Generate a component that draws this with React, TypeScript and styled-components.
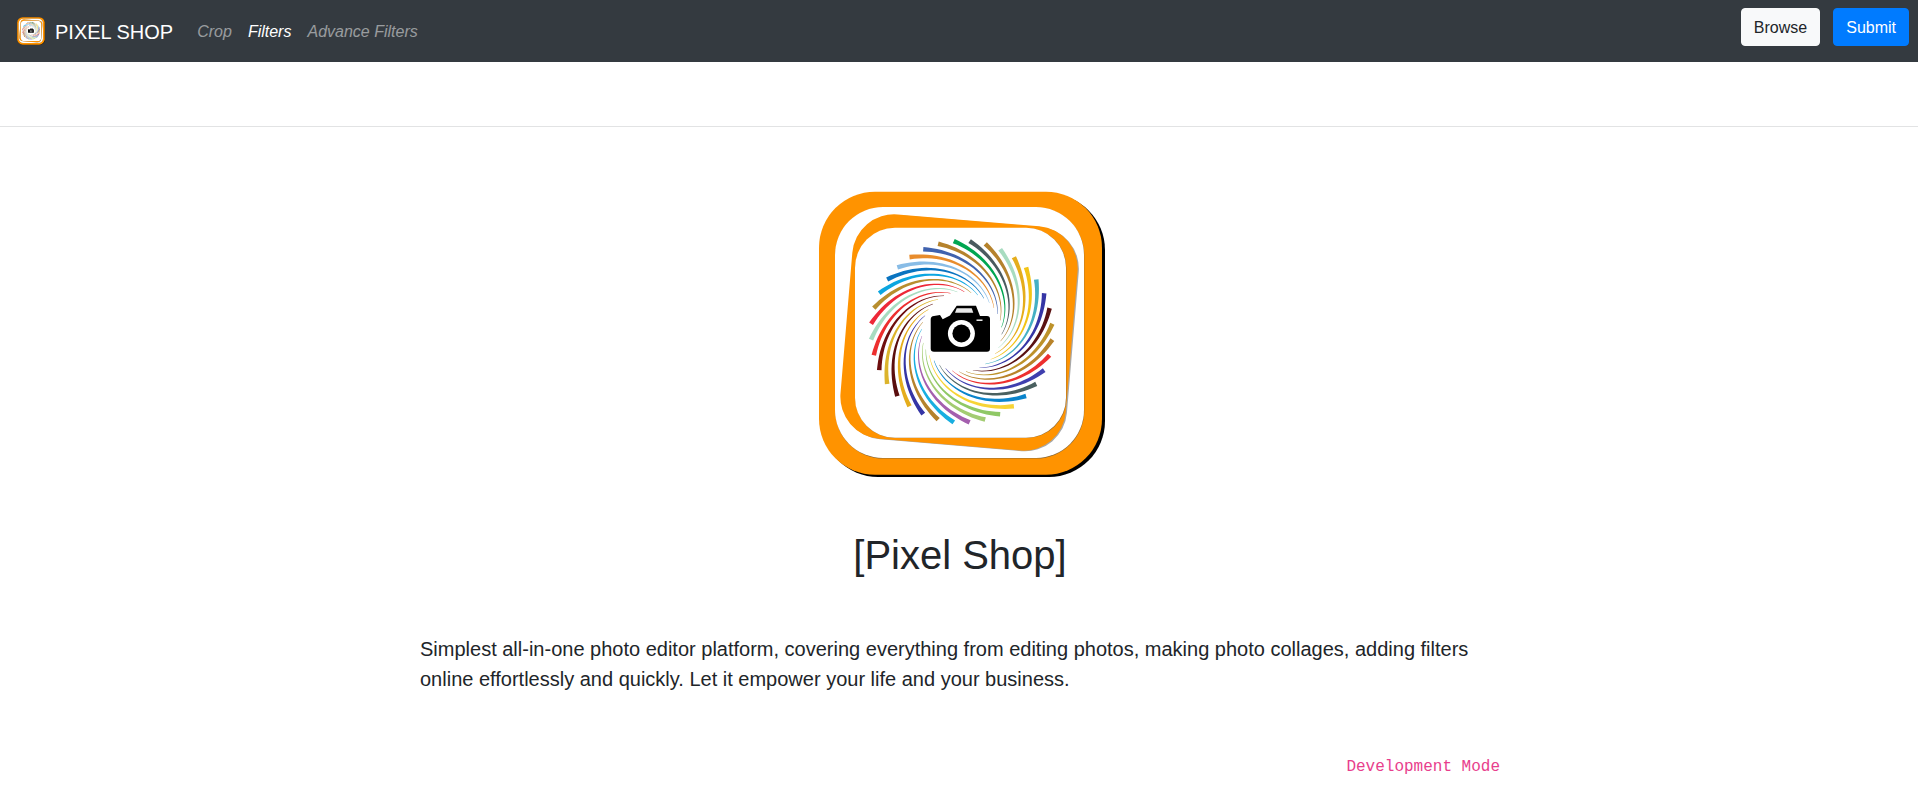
import styled, { createGlobalStyle } from 'styled-components';

const GlobalStyle = createGlobalStyle`
  * {
    box-sizing: border-box;
  }

  body {
    margin: 0;
    background: #fff;
    color: #212529;
    font-family: 'Liberation Sans', Arial, sans-serif;
    font-size: 16px;
    line-height: 1.5;
  }
`;

const Navbar = styled.nav`
  height: 62px;
  background: #343a40;
  display: flex;
  justify-content: space-between;
  align-items: flex-start;
  padding: 8px 9px 0 17px;
`;

const NavLeft = styled.div`
  display: flex;
  align-items: center;
  height: 46px;
`;

const Brand = styled.a`
  display: flex;
  align-items: center;
  gap: 10px;
  color: #fff;
  font-size: 20px;
  margin-right: 24px;
`;

const BrandName = styled.span`
  padding-top: 2px;
`;

const NavLinks = styled.div`
  display: flex;
  gap: 16px;
  padding-top: 2px;
`;

const NavLink = styled.a<{ $active?: boolean }>`
  font-style: italic;
  color: ${(p) => (p.$active ? '#fff' : 'rgba(255, 255, 255, 0.5)')};
`;

const NavButtons = styled.div`
  display: flex;
  gap: 13px;
`;

const Button = styled.button<{ $primary?: boolean }>`
  height: 38px;
  padding: 2px 12px 0;
  border: 1px solid ${(p) => (p.$primary ? '#007bff' : '#f8f9fa')};
  border-radius: 4px;
  background: ${(p) => (p.$primary ? '#007bff' : '#f8f9fa')};
  color: ${(p) => (p.$primary ? '#fff' : '#212529')};
  font: inherit;
`;

const SubBar = styled.div`
  height: 65px;
  border-bottom: 1px solid #e2e3e4;
`;

const Main = styled.main`
  display: flex;
  flex-direction: column;
  align-items: center;
  padding-top: 53px;
`;

const LogoSvg = styled.svg`
  display: block;
  flex: none;
  filter: blur(0.35px);
`;

const Title = styled.h1`
  margin: 41px 0 0 2px;
  font-size: 40px;
  font-weight: 400;
  line-height: 48px;
`;

const Content = styled.div`
  width: 1082px;
  margin-top: 55px;
  padding-left: 2px;
`;

const Lead = styled.p`
  margin: 0;
  font-size: 20px;
  line-height: 30px;
`;

const ModeRow = styled.div`
  display: flex;
  justify-content: flex-end;
  margin-top: 61px;
`;

const ModeCode = styled.code`
  color: #e83e8c;
  font-family: 'Liberation Mono', 'Courier New', monospace;
  font-size: 16px;
`;

const STRAND_COLORS = [
  '#00a651', '#4a5a5f', '#b5822c', '#a8dcc0', '#e5ad1c', '#f2c416',
  '#45b0c4', '#3535a5', '#5a1212', '#bd922a', '#b8832a', '#ed2f2f',
  '#3f3fae', '#4a6060', '#0a84cc', '#f7d436', '#8fc865', '#a3cc72',
  '#a45fae', '#18aee0', '#b5822c', '#3535a5', '#e5ad1c', '#5a0e0e',
  '#dcb42c', '#6e0f0f', '#ed2f2f', '#a8dcc0', '#ed2838', '#b88e2e',
  '#0ca6e0', '#0a74c0', '#88bce6', '#e88c2c', '#4062ae', '#b5822c',
];

const CX = 161.7;
const CY = 151.7;
const R_OUTER = 91;
const R_INNER = 40;
const SPIRAL_K = 108;

// one tapered arm of the iris: a log spiral, thick at the outer tip
function strandPath(tipDeg: number): string {
  const steps = 24;
  const points: Array<[number, number]> = [];
  for (let i = 0; i <= steps; i += 1) {
    const r = R_OUTER + ((R_INNER - R_OUTER) * i) / steps;
    const a = ((tipDeg + SPIRAL_K * Math.log(R_OUTER / r)) * Math.PI) / 180;
    points.push([CX + r * Math.sin(a), CY - r * Math.cos(a)]);
  }
  const left: string[] = [];
  const right: string[] = [];
  points.forEach(([x, y], i) => {
    const [px, py] = points[Math.max(i - 1, 0)];
    const [qx, qy] = points[Math.min(i + 1, steps)];
    const len = Math.hypot(qx - px, qy - py);
    const half = (4.6 - 4.2 * Math.pow(i / steps, 0.75)) / 2;
    const nx = (-(qy - py) / len) * half;
    const ny = ((qx - px) / len) * half;
    left.push(`${(x + nx).toFixed(2)} ${(y + ny).toFixed(2)}`);
    right.unshift(`${(x - nx).toFixed(2)} ${(y - ny).toFixed(2)}`);
  });
  return `M${left.join('L')}L${right.join('L')}Z`;
}

function Logo({
  size,
  height,
  viewBox,
}: {
  size: number;
  height: number;
  viewBox: string;
}): JSX.Element {
  return (
    <LogoSvg width={size} height={height} viewBox={viewBox} aria-hidden="true">
      <rect x="22" y="14" width="283" height="283" rx="56" fill="#000" />
      <rect x="19" y="11.7" width="283" height="283" rx="56" fill="#ff9300" />
      <rect x="35.3" y="27.6" width="249" height="251" rx="48" fill="#8a6a3a" />
      <rect x="35" y="27" width="249" height="251" rx="48" fill="#fff" />
      <rect
        x="47.2"
        y="40.6"
        width="226"
        height="225"
        rx="42"
        fill="#a8a8a8"
        transform="rotate(4.8 160 153.5)"
      />
      <rect
        x="46"
        y="40"
        width="226"
        height="225"
        rx="42"
        fill="#ff9300"
        transform="rotate(4.8 159 152.7)"
      />
      <rect x="55.4" y="48.1" width="211" height="210" rx="40" fill="#8a6a3a" />
      <rect x="55" y="47.7" width="211" height="210" rx="40" fill="#fff" />
      {STRAND_COLORS.map((color, i) => (
        <path key={i} d={strandPath(-5 + i * 10)} fill={color} />
      ))}
      <path
        d="M130.7 139.5Q130.7 136 134 136L140 135L142.7 139.3L150 135.5L151.7 133L156.7 125.7H176L180 136H187Q190 136 190 139V168.7Q190 171.7 187 171.7H134Q130.7 171.7 130.7 168.7Z"
        fill="#000"
      />
      <path d="M156.7 128.3H171.7L173.3 132.7H155Z" fill="#e8e8e8" />
      <circle cx="161.4" cy="153.5" r="13.5" fill="#fff" />
      <circle cx="161.4" cy="153.5" r="9" fill="#000" />
      <rect x="176.5" y="139.5" width="6" height="1.4" fill="#fff" />
    </LogoSvg>
  );
}

export default function App(): JSX.Element {
  return (
    <>
      <GlobalStyle />
      <Navbar>
        <NavLeft>
          <Brand>
            <Logo size={28} height={28} viewBox="17 10 288 288" />
            <BrandName>PIXEL SHOP</BrandName>
          </Brand>
          <NavLinks>
            <NavLink>Crop</NavLink>
            <NavLink $active>Filters</NavLink>
            <NavLink>Advance Filters</NavLink>
          </NavLinks>
        </NavLeft>
        <NavButtons>
          <Button>Browse</Button>
          <Button $primary>Submit</Button>
        </NavButtons>
      </Navbar>
      <SubBar />
      <Main>
        <Logo size={318} height={310} viewBox="0 0 318 310" />
        <Title>[Pixel Shop]</Title>
        <Content>
          <Lead>
            Simplest all-in-one photo editor platform, covering everything from editing photos,
            making photo collages, adding filters online effortlessly and quickly. Let it empower
            your life and your business.
          </Lead>
          <ModeRow>
            <ModeCode>Development Mode</ModeCode>
          </ModeRow>
        </Content>
      </Main>
    </>
  );
}
